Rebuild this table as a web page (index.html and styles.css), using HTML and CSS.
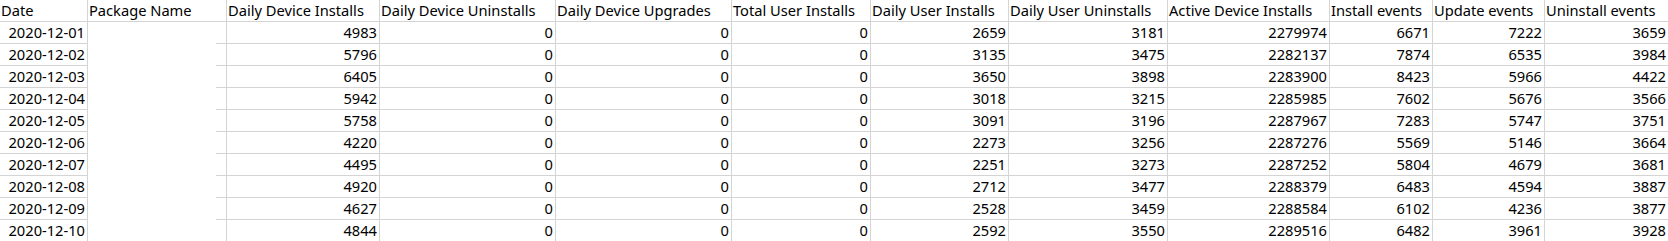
FILE: index.html
```html
<!DOCTYPE html>
<html>
<head>
<meta charset="utf-8">
<link rel="stylesheet" href="styles.css">
</head>
<body>
<div class="sheet">
  <div class="c h">Date</div><div class="c h">Package Name</div><div class="c h">Daily Device Installs</div><div class="c h">Daily Device Uninstalls</div><div class="c h">Daily Device Upgrades</div><div class="c h">Total User Installs</div><div class="c h">Daily User Installs</div><div class="c h">Daily User Uninstalls</div><div class="c h">Active Device Installs</div><div class="c h">Install events</div><div class="c h">Update events</div><div class="c h">Uninstall events</div>

  <div class="c n">2020-12-01</div><div class="c p"></div><div class="c n">4983</div><div class="c n">0</div><div class="c n">0</div><div class="c n">0</div><div class="c n">2659</div><div class="c n">3181</div><div class="c n">2279974</div><div class="c n">6671</div><div class="c n">7222</div><div class="c n">3659</div>
  <div class="c n">2020-12-02</div><div class="c p"></div><div class="c n">5796</div><div class="c n">0</div><div class="c n">0</div><div class="c n">0</div><div class="c n">3135</div><div class="c n">3475</div><div class="c n">2282137</div><div class="c n">7874</div><div class="c n">6535</div><div class="c n">3984</div>
  <div class="c n">2020-12-03</div><div class="c p"></div><div class="c n">6405</div><div class="c n">0</div><div class="c n">0</div><div class="c n">0</div><div class="c n">3650</div><div class="c n">3898</div><div class="c n">2283900</div><div class="c n">8423</div><div class="c n">5966</div><div class="c n">4422</div>
  <div class="c n">2020-12-04</div><div class="c p"></div><div class="c n">5942</div><div class="c n">0</div><div class="c n">0</div><div class="c n">0</div><div class="c n">3018</div><div class="c n">3215</div><div class="c n">2285985</div><div class="c n">7602</div><div class="c n">5676</div><div class="c n">3566</div>
  <div class="c n">2020-12-05</div><div class="c p"></div><div class="c n">5758</div><div class="c n">0</div><div class="c n">0</div><div class="c n">0</div><div class="c n">3091</div><div class="c n">3196</div><div class="c n">2287967</div><div class="c n">7283</div><div class="c n">5747</div><div class="c n">3751</div>
  <div class="c n">2020-12-06</div><div class="c p"></div><div class="c n">4220</div><div class="c n">0</div><div class="c n">0</div><div class="c n">0</div><div class="c n">2273</div><div class="c n">3256</div><div class="c n">2287276</div><div class="c n">5569</div><div class="c n">5146</div><div class="c n">3664</div>
  <div class="c n">2020-12-07</div><div class="c p"></div><div class="c n">4495</div><div class="c n">0</div><div class="c n">0</div><div class="c n">0</div><div class="c n">2251</div><div class="c n">3273</div><div class="c n">2287252</div><div class="c n">5804</div><div class="c n">4679</div><div class="c n">3681</div>
  <div class="c n">2020-12-08</div><div class="c p"></div><div class="c n">4920</div><div class="c n">0</div><div class="c n">0</div><div class="c n">0</div><div class="c n">2712</div><div class="c n">3477</div><div class="c n">2288379</div><div class="c n">6483</div><div class="c n">4594</div><div class="c n">3887</div>
  <div class="c n">2020-12-09</div><div class="c p"></div><div class="c n">4627</div><div class="c n">0</div><div class="c n">0</div><div class="c n">0</div><div class="c n">2528</div><div class="c n">3459</div><div class="c n">2288584</div><div class="c n">6102</div><div class="c n">4236</div><div class="c n">3877</div>
  <div class="c n">2020-12-10</div><div class="c p"></div><div class="c n">4844</div><div class="c n">0</div><div class="c n">0</div><div class="c n">0</div><div class="c n">2592</div><div class="c n">3550</div><div class="c n">2289516</div><div class="c n">6482</div><div class="c n">3961</div><div class="c n">3928</div>
</div>
</body>
</html>
```

FILE: styles.css
```css
html, body {
  margin: 0;
  padding: 0;
  background: #ffffff;
  overflow: hidden;
}

.sheet {
  display: grid;
  grid-template-columns: 88px 139px 153px 176px 176px 139px 138px 159px 162px 103px 112px 124px;
  grid-auto-rows: 22px;
  font-family: "Noto Sans", "Open Sans", sans-serif;
  font-size: 14.67px;
  color: #000000;
  width: 1669px;
}

.c {
  box-sizing: border-box;
  border-right: 1px solid #d4d4d4;
  border-bottom: 1px solid #d4d4d4;
  line-height: 21px;
  padding: 0 1px 0 1px;
  white-space: nowrap;
  overflow: hidden;
}

.h {
  text-align: left;
}

.n {
  text-align: right;
  padding-right: 2px;
}

.p {
  border-bottom: none;
  background: linear-gradient(#d4d4d4, #d4d4d4) right bottom / 10px 1px no-repeat;
}
```
